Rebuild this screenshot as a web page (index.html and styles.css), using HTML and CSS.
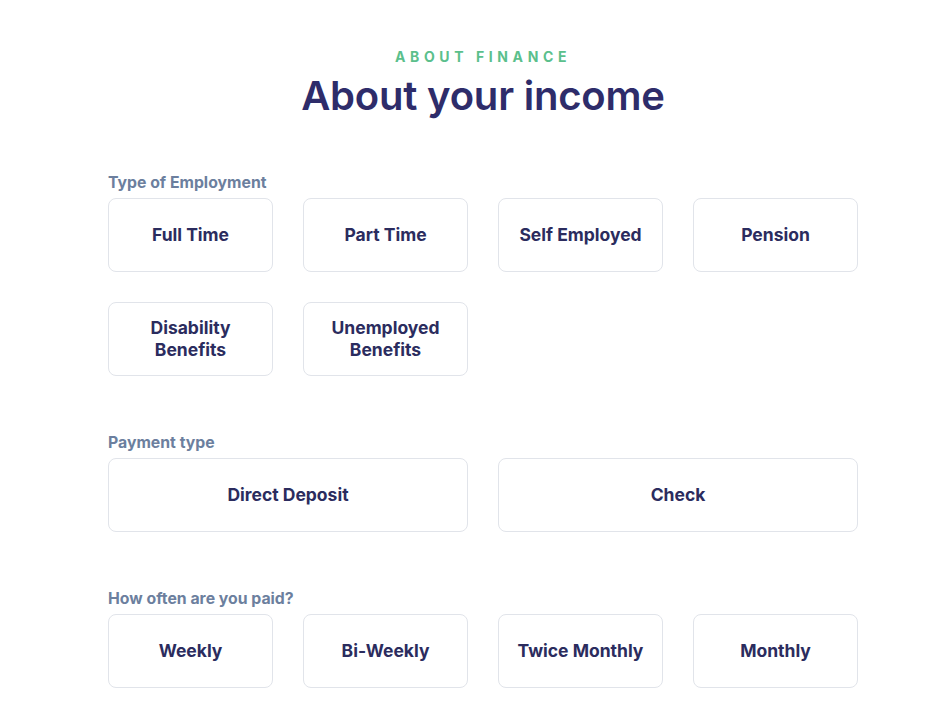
FILE: index.html
```html
<html>
  <head>
    <link rel="stylesheet" href="styles.css">
  </head>
  <body>
    <div class="page">
      <div class="intro">
        <p class="eyebrow">ABOUT FINANCE</p>
        <h1 class="title">About your income</h1>
      </div>

      <div class="group">
        <p class="groupLabel">Type of Employment</p>
        <div class="options four">
          <div class="option">Full Time</div>
          <div class="option">Part Time</div>
          <div class="option">Self Employed</div>
          <div class="option">Pension</div>
          <div class="option">Disability<br>Benefits</div>
          <div class="option">Unemployed<br>Benefits</div>
        </div>
      </div>

      <div class="group">
        <p class="groupLabel">Payment type</p>
        <div class="options two">
          <div class="option">Direct Deposit</div>
          <div class="option">Check</div>
        </div>
      </div>

      <div class="group">
        <p class="groupLabel">How often are you paid?</p>
        <div class="options four">
          <div class="option">Weekly</div>
          <div class="option">Bi-Weekly</div>
          <div class="option">Twice Monthly</div>
          <div class="option">Monthly</div>
        </div>
      </div>
    </div>
  </body>
</html>
```

FILE: styles.css
```css
body{
  margin: 0;
  background-color: #fff;
  font-family: Inter, "Noto Sans", sans-serif;
}
.page{
  width: 750px;
  margin: 0 auto;
  padding: 48px 0 0 31px;
}
.intro{
  text-align: center;
  margin-bottom: 54px;
}
.eyebrow{
  margin: 0;
  font-size: 14px;
  line-height: 17px;
  font-weight: 700;
  letter-spacing: 4.6px;
  color: #5bbf8c;
}
.title{
  margin: 7px 0 0 0;
  font-size: 40px;
  line-height: 48px;
  font-weight: 600;
  color: #2e2c6a;
  letter-spacing: -0.2px;
}
.group{
  margin-bottom: 58px;
}
.groupLabel{
  margin: 0 0 6px 0;
  font-size: 15.8px;
  line-height: 18px;
  font-weight: 700;
  color: #6c7f9e;
}
.options{
  display: grid;
  column-gap: 30px;
  row-gap: 30px;
}
.four{
  grid-template-columns: repeat(4, 1fr);
}
.two{
  grid-template-columns: repeat(2, 1fr);
}
.option{
  height: 74px;
  box-sizing: border-box;
  display: flex;
  align-items: center;
  justify-content: center;
  text-align: center;
  border: 1px solid #e1e4ea;
  border-radius: 8px;
  font-size: 17.5px;
  line-height: 22px;
  font-weight: 700;
  color: #2b2c5e;
}
```
